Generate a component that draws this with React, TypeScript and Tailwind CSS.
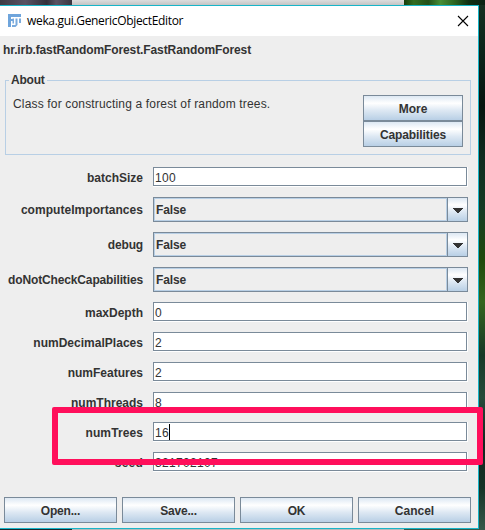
import React from "react";

type Field = { label: string; value: string; kind: "text" | "select"; caret?: boolean; spacing?: string };

const fields: Field[] = [
  { label: "batchSize", value: "100", kind: "text" },
  { label: "computeImportances", value: "False", kind: "select", spacing: "tracking-[0.04px]" },
  { label: "debug", value: "False", kind: "select", spacing: "tracking-[-0.15px]" },
  { label: "doNotCheckCapabilities", value: "False", kind: "select", spacing: "tracking-[-0.14px]" },
  { label: "maxDepth", value: "0", kind: "text" },
  { label: "numDecimalPlaces", value: "2", kind: "text", spacing: "tracking-[0.02px]" },
  { label: "numFeatures", value: "2", kind: "text" },
  { label: "numThreads", value: "8", kind: "text" },
  { label: "numTrees", value: "16", kind: "text", caret: true, spacing: "tracking-[0.1px]" },
  { label: "seed", value: "321702107", kind: "text", spacing: "tracking-[0.2px]" },
];

const metal = "bg-[linear-gradient(to_bottom,#dde8f3_0%,#ffffff_30%,#dde8f3_60%,#b8cfe5_100%)]";

function MetalButton({ label, size }: { label: string; size: string }) {
  return (
    <button className={`flex h-[26px] items-center justify-center border border-[#7a8a99] pt-px font-bold ${metal} ${size}`}>
      {label}
    </button>
  );
}

function TextField({ value, caret }: { value: string; caret?: boolean }) {
  return (
    <div className="h-5 w-[315px] border-r border-b border-white">
      <div className="flex h-[19px] w-[314px] items-center border border-[#7a8a99] bg-white pt-[2px] pl-px">
        <span className="tracking-[0.33px]">{value}</span>
        {caret && <span className="-mt-[2px] h-4 w-px bg-black" />}
      </div>
    </div>
  );
}

function SelectField({ value }: { value: string }) {
  return (
    <div className="flex h-[25px] w-[315px] border border-[#7a8a99]">
      <div className="flex flex-1 items-center border border-[#b8cfe5] pl-px font-bold tracking-[-0.1px]">{value}</div>
      <div className={`flex w-5 items-center justify-center border-l border-[#7a8a99] ${metal}`}>
        <svg width="10" height="5" viewBox="0 0 10 5" shapeRendering="crispEdges" className="mt-px">
          <path d="M0 0h10v1H9v1H8v1H7v1H6v1H4V4H3V3H2V2H1V1H0z" fill="#333" />
        </svg>
      </div>
    </div>
  );
}

function AppIcon() {
  return (
    <svg width="14" height="14" viewBox="0 0 14 14" className="ml-2">
      <path d="M0 0h13v3H3v2h2v2H3v6H0z" fill="#6fa5dc" />
      <path d="M4.5 4.500h1.500v5h-1.500zM7.500 4.500h2v6.500l-2 2h-3.500v-2h3.500zM11 4.500h2v4.500h-2z" fill="#7babdd" />
    </svg>
  );
}

export default function App() {
  return (
    <div className="relative flex h-[530px] w-[485px] flex-col overflow-hidden bg-[linear-gradient(to_bottom,#163021_0%,#0b241a_10%,#07150f_20%,#102c20_30%,#163c24_40%,#1f4a0c_49%,#34651e_57%,#173827_67%,#264b39_75%,#10271f_84%,#153326_92%,#36594a_100%)] font-['Liberation_Sans',Arial,sans-serif] text-[12px] leading-[14px] text-[#333]">
      <div className="flex h-[5px] shrink-0">
        <div className="w-[72px] bg-[linear-gradient(to_right,#3d3a43,#595263_35%,#32303a_65%,#5a5363_78%,#393540)]" />
        <div className="w-[332px] bg-[linear-gradient(to_bottom,#dddddd,#c4c4c4)]" />
        <div className="flex-1 bg-[linear-gradient(to_right,#173d0c,#326c20_12%,#225019_30%,#468d35_45%,#2d6520_62%,#102f12_80%,#0b2115)]" />
      </div>
      <main className="flex h-[524px] w-[479px] shrink-0 flex-col border-y border-r border-[#18b5c8] bg-[#eee]">
        <header className="flex h-[30px] shrink-0 items-center bg-white">
          <AppIcon />
          <h1 className="ml-[5px] flex-1 font-['Open_Sans','Noto_Sans',sans-serif] text-[12px] leading-[16px] tracking-[-0.33px] whitespace-nowrap text-black">
            weka.gui.GenericObjectEditor
          </h1>
          <svg width="10" height="10" viewBox="0 0 10 10" className="mr-[10px] overflow-visible" aria-label="Close">
            <path d="M0 0l10 10M10 0l-10 10" stroke="#000" strokeWidth="1.1" fill="none" />
          </svg>
        </header>
        <div className="mt-[7px] ml-[3px] h-[14px] shrink-0 font-bold tracking-[-0.1px] whitespace-nowrap">
          hr.irb.fastRandomForest.FastRandomForest
        </div>
        <section className="relative mt-[23px] ml-[5px] flex h-[75px] w-[466px] shrink-0 justify-between border border-[#b8cfe5]">
          <h2 className="absolute -top-[8px] left-[3px] bg-[#eee] pr-[2px] pl-[2px] font-bold tracking-[-0.2px]">About</h2>
          <p className="mt-4 ml-[7px] tracking-[0.165px] whitespace-nowrap">Class for constructing a forest of random trees.</p>
          <div className="mt-[14px] mr-[7px]">
            <MetalButton label="More" size="w-[100px]" />
            <MetalButton label="Capabilities" size="w-[100px] tracking-[-0.1px]" />
          </div>
        </section>
        <form className="mt-3 flex shrink-0 flex-col gap-[10px]">
          {fields.map((f) => (
            <div key={f.label} className="flex items-center">
              <label className={`mr-[10px] w-[143px] pt-px text-right font-bold ${f.spacing ?? ""}`}>{f.label}</label>
              {f.kind === "select" ? <SelectField value={f.value} /> : <TextField value={f.value} caret={f.caret} />}
            </div>
          ))}
        </form>
        <footer className="mt-[25px] ml-1 flex gap-[5px]">
          <MetalButton label="Open..." size="w-[113px] tracking-[-0.2px]" />
          <MetalButton label="Save..." size="w-[113px] tracking-[-0.2px]" />
          <MetalButton label="OK" size="w-[113px] tracking-[-0.3px]" />
          <MetalButton label="Cancel" size="w-[113px]" />
        </footer>
      </main>
      <div className="flex h-px shrink-0">
        <div className="w-[72px] bg-[#18292e]" />
        <div className="w-[332px] bg-[#b5b9b9]" />
      </div>
      <div className="absolute top-[407px] left-[52px] h-[58px] w-[431px] rounded-[2px] border-[6px] border-[#ff0f5b]" />
    </div>
  );
}
